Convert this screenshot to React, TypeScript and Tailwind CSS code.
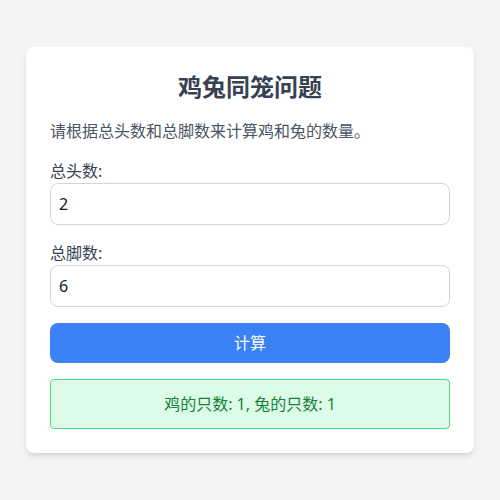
import { useState } from "react";

export default function App() {
  const [heads, setHeads] = useState("2");
  const [legs, setLegs] = useState("6");
  const [result, setResult] = useState("鸡的只数: 1, 兔的只数: 1");

  const calculate = () => {
    const h = Number(heads);
    const l = Number(legs);
    const rabbits = (l - 2 * h) / 2;
    const chickens = h - rabbits;
    if (rabbits < 0 || chickens < 0 || !Number.isInteger(rabbits)) {
      setResult("无解");
      return;
    }
    setResult(`鸡的只数: ${chickens}, 兔的只数: ${rabbits}`);
  };

  return (
    <div
      className="min-h-screen bg-[#f3f4f6] pt-[47px]"
      style={{ fontFamily: '"Noto Sans", "Noto Sans CJK SC", sans-serif' }}
    >
      <div className="mx-auto w-[448px] rounded-lg bg-white p-6 shadow-md">
        <h1 className="mb-4 text-center text-2xl font-bold text-[#374151]">鸡兔同笼问题</h1>
        <p className="mb-4 text-base text-[#4b5563]">请根据总头数和总脚数来计算鸡和兔的数量。</p>

        <div className="mb-4">
          <label className="block text-base text-[#374151]">总头数:</label>
          <input
            value={heads}
            onChange={(e) => setHeads(e.target.value)}
            className="w-full rounded-lg border border-[#d1d5db] px-2 py-2 text-base text-[#111827] outline-none"
          />
        </div>

        <div>
          <label className="block text-base text-[#374151]">总脚数:</label>
          <input
            value={legs}
            onChange={(e) => setLegs(e.target.value)}
            className="w-full rounded-lg border border-[#d1d5db] px-2 py-2 text-base text-[#111827] outline-none"
          />
        </div>

        <button
          onClick={calculate}
          className="mt-4 w-full rounded-lg bg-[#3b82f6] py-2 text-base text-white"
        >
          计算
        </button>

        <div className="mt-4 rounded border border-[#4ade80] bg-[#dcfce7] p-3 text-center text-base text-[#15803d]">
          {result}
        </div>
      </div>
    </div>
  );
}
